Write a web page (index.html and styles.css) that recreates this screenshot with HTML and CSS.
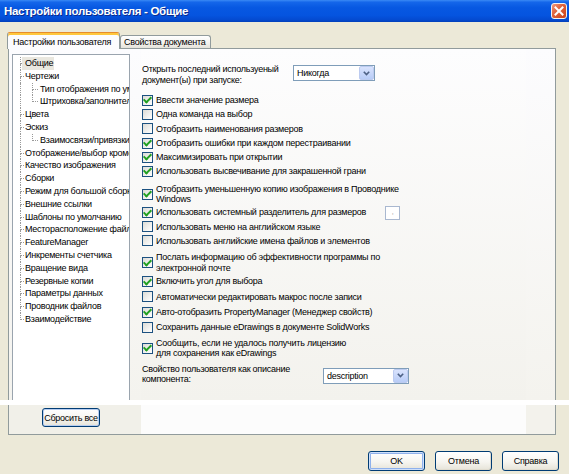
FILE: index.html
```html
<!DOCTYPE html>
<html lang="ru">
<head>
<meta charset="utf-8">
<title>Настройки пользователя - Общие</title>
<link rel="stylesheet" href="styles.css">
</head>
<body>
<div class="window">
  <div class="titlebar">
    <span class="title">Настройки пользователя - Общие</span>
    <span class="close"><svg width="10" height="10" viewBox="0 0 10 10"><path d="M1.5 1.5 L8.5 8.5 M8.5 1.5 L1.5 8.5" stroke="#fff" stroke-width="2" stroke-linecap="square"/></svg></span>
  </div>

  <div class="tabs">
    <div class="tab active">Настройки пользователя</div>
    <div class="tab">Свойства документа</div>
  </div>

  <div class="panel">
    <div class="tree">
      <div class="node"><span class="br"></span><span class="t sel">Общие</span></div>
      <div class="node"><span class="br"></span><span class="t">Чертежи</span></div>
      <div class="node sub"><span class="guide"></span><span class="br"></span><span class="t">Тип отображения по умолчанию</span></div>
      <div class="node sub last"><span class="guide"></span><span class="br"></span><span class="t">Штриховка/заполнитель</span></div>
      <div class="node"><span class="br"></span><span class="t">Цвета</span></div>
      <div class="node"><span class="br"></span><span class="t">Эскиз</span></div>
      <div class="node sub last"><span class="guide"></span><span class="br"></span><span class="t">Взаимосвязи/привязки</span></div>
      <div class="node"><span class="br"></span><span class="t">Отображение/выбор кромок</span></div>
      <div class="node"><span class="br"></span><span class="t">Качество изображения</span></div>
      <div class="node"><span class="br"></span><span class="t">Сборки</span></div>
      <div class="node"><span class="br"></span><span class="t">Режим для большой сборки</span></div>
      <div class="node"><span class="br"></span><span class="t">Внешние ссылки</span></div>
      <div class="node"><span class="br"></span><span class="t">Шаблоны по умолчанию</span></div>
      <div class="node"><span class="br"></span><span class="t">Месторасположение файлов</span></div>
      <div class="node"><span class="br"></span><span class="t">FeatureManager</span></div>
      <div class="node"><span class="br"></span><span class="t">Инкременты счетчика</span></div>
      <div class="node"><span class="br"></span><span class="t">Вращение вида</span></div>
      <div class="node"><span class="br"></span><span class="t">Резервные копии</span></div>
      <div class="node"><span class="br"></span><span class="t">Параметры данных</span></div>
      <div class="node"><span class="br"></span><span class="t">Проводник файлов</span></div>
      <div class="node last"><span class="br"></span><span class="t">Взаимодействие</span></div>
    </div>

    <div class="content">
      <div class="open-row">
        <div class="lbl">Открыть последний используеный<br>документ(ы) при запуске:</div>
        <div class="combo combo-open"><span>Никогда</span><span class="arrow"><svg width="7" height="5" viewBox="0 0 7 5"><path d="M0.8 0.8 L3.5 3.6 L6.2 0.8" stroke="#4d6185" stroke-width="1.6" fill="none"/></svg></span></div>
      </div>

      <div class="opts">
        <div class="opt"><span class="cb on"></span><span>Ввести значение размера</span></div>
        <div class="opt"><span class="cb"></span><span>Одна команда на выбор</span></div>
        <div class="opt"><span class="cb"></span><span>Отобразить наименования размеров</span></div>
        <div class="opt"><span class="cb on"></span><span>Отобразить ошибки при каждом перестраивании</span></div>
        <div class="opt"><span class="cb on"></span><span>Максимизировать при открытии</span></div>
        <div class="opt"><span class="cb on"></span><span>Использовать высвечивание для закрашенной грани</span></div>
        <div class="opt two"><span class="cb on"></span><span>Отобразить уменьшенную копию изображения в Проводнике<br>Windows</span></div>
        <div class="opt"><span class="cb on"></span><span class="sep-lbl">Использовать системный разделитель для размеров</span><span class="tbox">,</span></div>
        <div class="opt"><span class="cb"></span><span>Использовать меню на английском языке</span></div>
        <div class="opt"><span class="cb"></span><span>Использовать английские имена файлов и элементов</span></div>
        <div class="opt two gap4"><span class="cb on"></span><span>Послать информацию об эффективности программы по<br>электронной почте</span></div>
        <div class="opt wide"><span class="cb on"></span><span>Включить угол для выбора</span></div>
        <div class="opt wide"><span class="cb"></span><span>Автоматически редактировать макрос после записи</span></div>
        <div class="opt wide"><span class="cb on"></span><span>Авто-отобразить PropertyManager (Менеджер свойств)</span></div>
        <div class="opt wide"><span class="cb"></span><span>Сохранить данные eDrawings в документе SolidWorks</span></div>
        <div class="opt two gap3"><span class="cb on"></span><span>Сообщить, если не удалось получить лицензию<br>для сохранения как eDrawings</span></div>
      </div>

      <div class="prop-row">
        <div class="lbl">Свойство пользователя как описание<br>компонента:</div>
        <div class="combo combo-desc"><span>description</span><span class="arrow"><svg width="7" height="5" viewBox="0 0 7 5"><path d="M0.8 0.8 L3.5 3.6 L6.2 0.8" stroke="#4d6185" stroke-width="1.6" fill="none"/></svg></span></div>
      </div>
    </div>
  </div>

  <div class="strip"></div>

  <div class="lower">
    <div class="lower-left"><button class="btn reset">Сбросить все</button></div>
    <div class="lower-mid"></div>
    <div class="lower-right"></div>
  </div>

  <div class="actions">
    <button class="btn default">OK</button>
    <button class="btn">Отмена</button>
    <button class="btn">Справка</button>
  </div>
</div>
</body>
</html>
```

FILE: styles.css
```css
* { box-sizing: border-box; }
html, body { margin: 0; padding: 0; }
body {
  width: 569px;
  height: 474px;
  overflow: hidden;
  background: #ece9d8;
  font-family: "Liberation Sans", Arial, sans-serif;
  font-size: 9px;
  letter-spacing: -0.25px;
  color: #000;
}
.window { display: flex; flex-direction: column; height: 474px; }

/* title bar */
.titlebar {
  height: 22px;
  flex: none;
  display: flex;
  align-items: center;
  justify-content: space-between;
  padding: 0 2px 0 4px;
  background: linear-gradient(to bottom, #3a8af5 0%, #1466ea 10%, #0758e2 35%, #0554df 70%, #044ad0 90%, #033fba 100%);
}
.title {
  color: #fff;
  font-size: 11.5px;
  font-weight: bold;
  letter-spacing: -0.3px;
  text-shadow: 1px 1px 0 #0b2a8c;
}
.close {
  width: 16px;
  height: 16px;
  border: 1px solid #f2f2f2;
  border-radius: 3px;
  background: linear-gradient(135deg, #ee9a80 0%, #e0643e 40%, #cc4318 100%);
  display: flex;
  align-items: center;
  justify-content: center;
}

/* tabs */
.tabs {
  height: 16px;
  flex: none;
  margin-top: 10px;
  padding-left: 7px;
  display: flex;
  align-items: flex-end;
}
.tab {
  height: 13px;
  width: 91px;
  padding: 0 0 0 3px;
  border: 1px solid #919b9c;
  border-bottom: none;
  border-radius: 3px 3px 0 0;
  background: linear-gradient(#ffffff, #f3f2ee 60%, #e4e2da);
  display: flex;
  align-items: center;
  line-height: 11px;
  white-space: nowrap;
}
.tab.active {
  height: 17px;
  width: 113px;
  margin-bottom: -1px;
  padding: 2px 0 0 5px;
  position: relative;
  z-index: 1;
  background: #fcfcfe;
  border-top: 1px solid #e68b2c;
  box-shadow: inset 0 2px 0 #ffc73c;
}

/* main panel */
.panel {
  height: 352px;
  flex: none;
  margin: 0 13px 0 8px;
  border: 1px solid #919b9c;
  border-bottom: none;
  background: linear-gradient(#fcfcfe, #f4f3ee);
  display: flex;
}

/* tree */
.tree {
  width: 118px;
  flex: none;
  margin: 5px 0 0 3px;
  padding-top: 2px;
  border: 1px solid #9aa4ae;
  border-bottom: none;
  background: #fff;
  overflow: hidden;
  white-space: nowrap;
}
.node {
  display: flex;
  align-items: stretch;
  height: 12.8px;
  line-height: 12.8px;
  padding-left: 7px;
}
.guide { width: 12px; flex: none; border-left: 1px dotted #9a9a9a; }
.br { width: 4px; flex: none; display: flex; flex-direction: column; }
.br::before {
  content: "";
  height: 6px;
  flex: none;
  border-left: 1px dotted #9a9a9a;
  border-bottom: 1px dotted #9a9a9a;
}
.br::after { content: ""; flex: 1; border-left: 1px dotted #9a9a9a; }
.last .br::after { border-left: none; }
.sub .br { width: 6px; }
.t { margin-left: 1px; }
.sub .t { margin-left: 2px; }
.sel { background: #e9e7df; padding: 0 1px 0 3px; margin-left: -2px; }

/* content */
.content {
  width: 385px;
  flex: none;
  margin-left: 11px;
  padding-left: 1px;
  background: linear-gradient(#fdfdfe, #f3f2ed);
  display: flex;
  flex-direction: column;
}
.open-row { display: flex; margin-top: 15px; }
.open-row .lbl { width: 151px; line-height: 11px; white-space: nowrap; }
.combo {
  height: 16px;
  border: 1px solid #7f9db9;
  background: #fff;
  display: flex;
  align-items: center;
  justify-content: space-between;
  padding-left: 3px;
  white-space: nowrap;
}
.combo-open { width: 82px; margin-top: 1px; }
.combo-desc { width: 86px; margin-top: 4px; }
.arrow {
  width: 15px;
  height: 14px;
  border: 1px solid #bccbf0;
  border-radius: 2px;
  background: linear-gradient(#d9e3fd, #b8ccf7);
  display: flex;
  align-items: center;
  justify-content: center;
}

.opts { display: flex; flex-direction: column; margin-top: 7.4px; }
.opt {
  display: flex;
  align-items: center;
  gap: 3px;
  height: 14.2px;
  line-height: 10.5px;
  white-space: nowrap;
}
.opt.two { height: auto; margin: 5px 0 1px; }
.opt.two.gap4 { margin-top: 4px; }
.opt.two.gap3 { margin-top: 3px; }
.opt.wide { height: 15.2px; }
.cb {
  width: 11px;
  height: 11px;
  flex: none;
  border: 1px solid #1c5180;
  background: linear-gradient(135deg, #dcdcd7, #ffffff);
  display: flex;
  align-items: center;
  justify-content: center;
}
.cb.on::after {
  content: "";
  width: 3px;
  height: 6px;
  border: solid #21a121;
  border-width: 0 2px 2px 0;
  transform: translateY(-1px) rotate(45deg);
}
.sep-lbl { width: 226px; }
.tbox {
  width: 15px;
  height: 14px;
  flex: none;
  border: 1px solid #a9b8d0;
  background: #fff;
  color: #999;
  font-size: 7px;
  line-height: 10px;
  display: flex;
  justify-content: center;
}
.prop-row { display: flex; margin-top: 4px; }
.prop-row .lbl { width: 181px; line-height: 10.5px; white-space: nowrap; }

/* glitch strip and lower part */
.strip { height: 5px; flex: none; background: #ffffff; }
.lower {
  height: 30px;
  flex: none;
  margin: 0 13px 0 8px;
  border: 1px solid #919b9c;
  border-top: none;
  display: flex;
}
.lower-left { width: 132px; background: #f1f0e9; }
.lower-mid { flex: 1; background: #fcfcfc; }
.lower-right { width: 29px; background: #f3f2ec; }

.btn {
  font: inherit;
  letter-spacing: inherit;
  color: #000;
  padding: 0;
  border: 1px solid #003c74;
  border-radius: 3px;
  background: linear-gradient(#ffffff 0%, #f6f5f0 55%, #e6e3d8 100%);
  box-shadow: inset -1px -1px 0 #e0dccf;
  white-space: nowrap;
}
.btn.reset {
  width: 58px;
  height: 19px;
  margin: 3px 0 0 33px;
  box-shadow: inset 0 0 0 1px #b7cdf0;
}
.actions {
  display: flex;
  justify-content: flex-end;
  gap: 10px;
  padding-right: 10px;
  margin-top: 16px;
}
.actions .btn { width: 57px; height: 20px; }
.btn.default { box-shadow: inset 0 0 0 1px #cfe0fb, inset 0 0 0 2px #8fb1ec; }
```
